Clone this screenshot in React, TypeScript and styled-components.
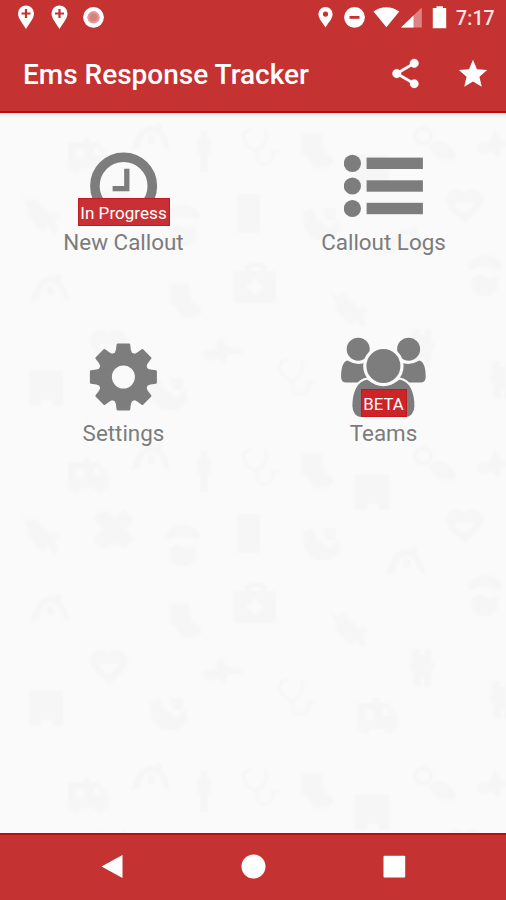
import React from 'react';
import styled, { createGlobalStyle } from 'styled-components';

const RED = '#c53232';
const GRAY = '#7d7d7d';
const MOTIF = '#f5f5f5';

const GlobalStyle = createGlobalStyle`
  body { margin: 0; background: #fafafa; font-family: Roboto, "Liberation Sans", sans-serif; }
  * { box-sizing: border-box; }
  svg { display: block; flex: none; }
`;

const Screen = styled.div`
  width: 506px;
  height: 900px;
  display: flex;
  flex-direction: column;
  overflow: hidden;
  background: #fafafa;
`;

const StatusBar = styled.div`
  height: 36px;
  flex: none;
  display: flex;
  justify-content: space-between;
  background: ${RED};
`;

const Clock = styled.span`
  width: 50px;
  padding-top: 7px;
  font-size: 19.5px;
  font-weight: 500;
  line-height: 24px;
  letter-spacing: 0.1px;
  color: #fbe6e6;
`;

const StatusRight = styled.div`
  display: flex;
  gap: 6px;
`;

const AppBar = styled.header`
  height: 77px;
  flex: none;
  display: flex;
  align-items: center;
  padding: 0 16px 0 23px;
  background: ${RED};
  border-bottom: 2px solid #bb0c10;
`;

const Title = styled.h1`
  margin: 0;
  padding-top: 3px;
  flex: 1;
  font-size: 28px;
  font-weight: 500;
  line-height: 36px;
  white-space: nowrap;
  color: #fff;
`;

const Actions = styled.div`
  display: flex;
  align-items: center;
  gap: 33px;
`;

const Content = styled.main`
  height: 720px;
  flex: none;
  display: grid;
  overflow: hidden;
  background: linear-gradient(#dfe5e2, #f1f4f2 3px, #fafafa 6px);
`;

const Backdrop = styled.svg`
  grid-area: 1 / 1;
  filter: blur(1.2px);
`;

const Menu = styled.div`
  grid-area: 1 / 1;
  z-index: 1;
  display: grid;
  grid-template-columns: 201px 201px;
  grid-auto-rows: 111px;
  gap: 80px 59px;
  align-content: start;
  padding: 33px 0 0 23px;
`;

const Tile = styled.div`
  display: flex;
  flex-direction: column;
  align-items: center;
`;

const TileIcon = styled.div`
  position: relative;
  width: 93px;
  height: 80px;
  display: flex;
  justify-content: center;
`;

const Badge = styled.span<{ $width: number; $size: number; $color: string }>`
  position: absolute;
  left: 50%;
  bottom: 0.5px;
  transform: translateX(-50%);
  width: ${(p) => p.$width}px;
  height: 28px;
  line-height: 28px;
  text-align: center;
  white-space: nowrap;
  font-size: ${(p) => p.$size}px;
  color: #fff;
  background: ${(p) => p.$color};
  border: 1px solid #c01a1e;
`;

const Label = styled.span`
  padding-top: 1px;
  font-size: 22.4px;
  line-height: 31px;
  white-space: nowrap;
  color: #7c7c7c;
`;

const NavBar = styled.nav`
  height: 67px;
  flex: none;
  display: flex;
  justify-content: center;
  align-items: center;
  gap: 113px;
  padding-bottom: 1px;
  background: ${RED};
  border-top: 2px solid #bb0c10;
`;

const Notifications = () => (
  <svg width="120" height="36">
    {[26, 59.5].map((x) => (
      <g key={x} transform={`translate(${x} 0)`}>
        <path d="M0 29C-2 25-8 19-8 13.5a8 8 0 0 1 16 0C8 19 2 25 0 29z" fill="#fff" />
        <path d="M0 9v9M-4.5 13.5h9" stroke={RED} strokeWidth="2.2" />
      </g>
    ))}
    <circle cx="93.5" cy="17.3" r="10.4" fill="#fff" />
    <circle cx="93.5" cy="17.3" r="6.2" fill="#e39a9a" />
    <circle cx="93.5" cy="17.3" r="4" fill="#d98080" />
  </svg>
);

const SystemIcons = () => (
  <svg width="140" height="36" viewBox="310 0 140 36" fill="#fff">
    <path fillRule="evenodd" d="M325.5 27.5c-1.6-3.5-7.1-8.3-7.1-13.5a7.1 7 0 0 1 14.2 0c0 5.2-5.5 10-7.1 13.5zM325.5 11.5a2.6 2.6 0 1 0 0 5.2a2.6 2.6 0 0 0 0-5.2z" />
    <circle cx="354.5" cy="17.3" r="10.4" />
    <rect x="349.5" y="16" width="10" height="2.8" fill={RED} />
    <path d="M373.5 11.5C381 5.7 391.5 5.7 399.3 11.5L386.4 27.3z" />
    <path d="M401 27.5L421.8 7.5V27.5z" opacity=".4" />
    <path d="M401 27.5L413.5 15.5V27.5z" />
    <path d="M436.5 8v-1.8h6.5V8h3.2v20.2h-13.4V8z" />
  </svg>
);

const ShareIcon = () => (
  <svg width="35" height="35" viewBox="0 0 24 24" fill="#fff">
    <path d="M18 16.08c-.76 0-1.44.3-1.96.77L8.91 12.7c.05-.23.09-.46.09-.7s-.04-.47-.09-.7l7.05-4.11c.54.5 1.25.81 2.04.81 1.66 0 3-1.34 3-3s-1.34-3-3-3-3 1.34-3 3c0 .24.04.47.09.7L8.04 9.81C7.5 9.31 6.79 9 6 9c-1.66 0-3 1.34-3 3s1.34 3 3 3c.79 0 1.5-.31 2.04-.81l7.12 4.16c-.05.21-.08.43-.08.65 0 1.61 1.31 2.92 2.92 2.92s2.92-1.31 2.92-2.92-1.31-2.92-2.92-2.92z" stroke="#fff" strokeWidth=".2" />
  </svg>
);

const StarIcon = () => (
  <svg width="34" height="34" viewBox="0 0 24 24" fill="#fff">
    <path d="M12 17.27L18.18 21l-1.64-7.03L22 9.24l-7.19-.61L12 2 9.19 8.63 2 9.24l5.46 4.73L5.82 21z" />
  </svg>
);

const ClockIcon = () => (
  <svg width="80" height="80" viewBox="0.4 0 80 80">
    <circle cx="40" cy="40" r="28.7" fill="none" stroke={GRAY} strokeWidth="9.6" />
    <path d="M43.2 22.8V42.6H29" fill="none" stroke={GRAY} strokeWidth="5.3" />
  </svg>
);

const ListIcon = () => (
  <svg width="80" height="80" viewBox="0.6 0 80 80" fill={GRAY}>
    {[17.3, 40, 62.5].map((y) => (
      <g key={y}>
        <circle cx="9" cy={y} r="8.6" />
        <rect x="23.2" y={y - 5.7} width="56.3" height="11.4" />
      </g>
    ))}
  </svg>
);

const GearIcon = () => (
  <svg width="80" height="80" viewBox="0.6 0 80 80" fill={GRAY}>
    <circle cx="40" cy="40" r="18.5" fill="none" stroke={GRAY} strokeWidth="14" />
    {[0, 45, 90, 135, 180, 225, 270, 315].map((a) => (
      <path key={a} transform={`rotate(${a} 40 40)`} d="M29.5 17.5Q32 16 32.5 13L33.2 7.4Q33.4 6.5 34.4 6.5H45.6Q46.6 6.5 46.8 7.4L47.5 13Q48 16 50.5 17.5L47 22H33z" />
    ))}
  </svg>
);

const TeamIcon = () => (
  <svg width="92" height="80" viewBox="0.6 0 92 80" fill={GRAY}>
    <circle cx="20.8" cy="12.2" r="11.5" />
    <circle cx="71.2" cy="12.2" r="11.5" />
    <path d="M10 23.5Q20 29.5 29 25L34 45.5H9Q3.7 45.5 3.7 40C3.7 32 5 25 10 23.5z" />
    <path d="M82 23.5Q72 29.5 63 25L58 45.5H83Q88.3 45.5 88.3 40C88.3 32 87 25 82 23.5z" />
    <path d="M30 41.5Q46 54 62 41.5C73 43 78 55 78 69C78 76 74 81 68 81H24C18 81 14 76 14 69C14 55 19 43 30 41.5z" stroke="#fafafa" strokeWidth="2" />
    <circle cx="46" cy="29" r="18.6" stroke="#fafafa" strokeWidth="3.2" />
  </svg>
);

const NavIcon = ({ children }: { children: React.ReactNode }) => (
  <svg width="28" height="28" fill="#fff">{children}</svg>
);

/* Faint medical motifs, each drawn around its own centre. */
const motifs: Record<string, React.ReactNode> = {
  ambulance: (
    <path fillRule="evenodd" d="M-20-13H-4V-18H2V-13H11L21 1V13H17A5 5 0 0 1 7 13H-7A5 5 0 0 1-17 13H-20zM6-8V0H14L9-8zM-12-6V4H-4V-6z" />
  ),
  arch: <path d="M-20 12Q-15-13 1-14Q14-14 20 12L13 8Q9-7 0-7Q-9-7-11 10zM-3-4H4V5H-3zM6-16H11V-9H6z" />,
  person: <path d="M-3-21H3V-14H7V2H4V20H-4V2H-7V-14H-3z" />,
  scope: (
    <path d="M-16-14Q-15-20-8-19M5-19Q10-12 2-2Q-4 5-11-2Q-18-9-16-14M-3 2Q-4 17 6 15Q14 14 13 3H20" fill="none" stroke={MOTIF} strokeWidth="3" />
  ),
  phone: <path d="M-12-19H11V20H-12z" />,
  syringe: <path d="M-21-20L-13-14L-8-18L9-1L13-4L18 1L13 6L17 15L12 18L6 11L0 16L-16-2L-14-8z" />,
  cross: <path d="M-20-11Q-15-22-4-16L1-10L9-20L20-10L12 0L21 10L11 20L1 14L-9 20Q-20 18-20 8L-12 0z" />,
  face: <path d="M-18-8Q-13-20 1-20Q15-19 18-8L13-5Q1-12-13-5zM-14 4L-5-1L4 4L14 0L12 15L6 21H-7L-13 15z" />,
  boot: <path d="M-14-18L6-19L9-1L18 5V13L6 17L-2 16L-8 3H-13z" />,
  heart: <path fillRule="evenodd" d="M0-12C8-20 19-14 19-6C19 5 7 10 0 19C-7 10-19 5-19-6C-19-14-8-20 0-12zM-11-2H10L2 7H-4z" />,
  star: <path d="M-20-2L-8-3L-2-16L4-5L20-4V2L5 2L2 13L-5 7L-18 9z" />,
  building: <path d="M-17-17H17V18H6V12H-5V18H-17z" />,
  hand: <path d="M-18-10L-8-14L-4-4L8 6L17-3L20 7L10 18H-7L-17 6zM2-14H15V-2H5z" />,
  medkit: <path fillRule="evenodd" d="M-21-12H-10V-18L-5-21H7L12-17V-12H21V20H-21zM-5-16V-12H7V-16zM-3-4V1H-8V7H-3V12H3V7H8V1H3V-4z" />,
  pills: (
    <g>
      <circle cx="-12" cy="-9" r="8" fill="none" stroke={MOTIF} strokeWidth="4" />
      <ellipse cx="8" cy="6" rx="14" ry="8" transform="rotate(28 8 6)" />
    </g>
  ),
  body: <path d="M-10-19H-2V-13H3V-19H9V-9L13-2L9 6V19H2V9H-1V19H-9V6L-13-1L-10-8z" />,
};

const placements: [string, number, number][] = [
  ['ambulance', 88, 475], ['arch', 151, 459], ['person', 204, 472], ['scope', 260, 469],
  ['boot', 315, 472], ['building', 372, 492], ['pills', 435, 465], ['star', 497, 465],
  ['syringe', 42, 536], ['cross', 114, 529], ['face', 183, 545], ['phone', 249, 533],
  ['hand', 321, 542], ['heart', 465, 525], ['arch', 406, 563], ['arch', 50, 610],
  ['medkit', 255, 603], ['face', 485, 595], ['boot', 183, 622], ['syringe', 350, 630],
  ['heart', 109, 666], ['star', 223, 672], ['body', 422, 668], ['building', 46, 708],
  ['hand', 168, 712], ['scope', 296, 699], ['ambulance', 377, 716], ['body', 502, 700],
];

const App = () => (
  <Screen>
    <GlobalStyle />
    <StatusBar>
      <Notifications />
      <StatusRight>
        <SystemIcons />
        <Clock>7:17</Clock>
      </StatusRight>
    </StatusBar>
    <AppBar>
      <Title>Ems Response Tracker</Title>
      <Actions>
        <ShareIcon />
        <StarIcon />
      </Actions>
    </AppBar>
    <Content>
      <Backdrop width="506" height="720" viewBox="0 113 506 720" fill={MOTIF} opacity="0.75">
        {[-320, 0, 320].map((dy) =>
          placements.map(([name, x, y]) => (
            <g key={`${name}-${x}-${y + dy}`} transform={`translate(${x} ${y + dy})`}>{motifs[name]}</g>
          )),
        )}
      </Backdrop>
      <Menu>
        <Tile>
          <TileIcon>
            <ClockIcon />
            <Badge $width={92} $size={17.1} $color="#c93035">In Progress</Badge>
          </TileIcon>
          <Label>New Callout</Label>
        </Tile>
        <Tile>
          <TileIcon><ListIcon /></TileIcon>
          <Label>Callout Logs</Label>
        </Tile>
        <Tile>
          <TileIcon><GearIcon /></TileIcon>
          <Label>Settings</Label>
        </Tile>
        <Tile>
          <TileIcon>
            <TeamIcon />
            <Badge $width={46} $size={16.8} $color="#cc2428">BETA</Badge>
          </TileIcon>
          <Label>Teams</Label>
        </Tile>
      </Menu>
    </Content>
    <NavBar>
      <NavIcon><path d="M3.5 13.5L24.500 2V25z" /></NavIcon>
      <NavIcon><circle cx="14.5" cy="13.5" r="12" /></NavIcon>
      <NavIcon><rect x="3.5" y="2.8" width="21.700" height="21.700" rx="1" /></NavIcon>
    </NavBar>
  </Screen>
);

export default App;
